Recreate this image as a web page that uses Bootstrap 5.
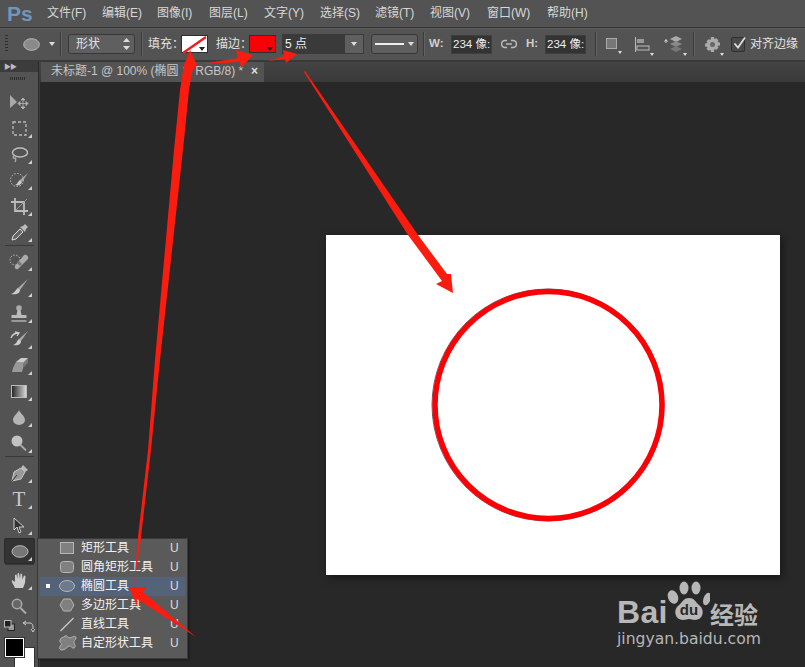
<!DOCTYPE html>
<html lang="zh">

<head>
    <meta charset="UTF-8">
    <meta name="viewport" content="width=device-width, initial-scale=1.0">
    <title>Photoshop</title>
    <link href="https://cdn.jsdelivr.net/npm/bootstrap@5.3.0/dist/css/bootstrap.min.css" rel="stylesheet">
    <style>
        html, body { height: 100%; }
        body {
            background: #282828;
            color: #dcdcdc;
            font-family: "Liberation Sans", "Noto Sans CJK SC", sans-serif;
            font-size: 12px;
            overflow: hidden;
            width: 805px;
            height: 667px;
        }
        .ps-page { position: relative; width: 805px; height: 667px; }
        .ps-menubar { height: 28px; background: #535353; border-bottom: 1px solid #333; }
        .ps-logo { width: 47px; padding-left: 7px; font-size: 21px; font-weight: 700; color: #6f97bb; line-height: 26px; }
        .ps-menuitem { color: #d8d8d8; line-height: 27px; white-space: nowrap; }
        .m1 { width: 55px; } .m2 { width: 55px; } .m3 { width: 52px; } .m4 { width: 55px; } .m5 { width: 56px; }
        .m6 { width: 55px; } .m7 { width: 55px; } .m8 { width: 57px; } .m9 { width: 60px; }

        .ps-options { height: 34px; background: #535353; border-bottom: 2px solid #3a3a3a; box-shadow: inset 0 1px 0 #5e5e5e; }
        .ps-grip { width: 3px; height: 18px; margin-left: 5px; background: repeating-linear-gradient(#2e2e2e 0 1px, transparent 1px 3px); }
        .ps-sep { width: 1px; height: 24px; background: #3b3b3b; box-shadow: 1px 0 0 #626262; }
        .ps-select { width: 67px; height: 20px; margin-left: 7px; background: #5f5f5f; border: 1px solid #383838; border-radius: 3px; padding-left: 7px; }
        .ps-label { color: #e2e2e2; white-space: nowrap; }
        .ps-lab-fill { width: 33px; }
        .ps-lab-w { width: 14px; font-weight: 700; font-size: 11.5px; color: #cfcfcf; }
        .ps-lab-h { width: 11px; font-weight: 700; font-size: 11.5px; color: #cfcfcf; }
        .ps-swatch { position: relative; width: 27px; height: 18px; border: 1px solid #2e2e2e; }
        .ps-swatch::after { content: ""; position: absolute; right: 2px; bottom: 1px; border: 3px solid transparent; border-top: 4px solid #222; border-bottom: 0; }
        .ps-red { background: #f80006; }
        .ps-combo { width: 82px; height: 20px; margin-left: 6px; border: 1px solid #3a3a3a; background: #3a3a3a; }
        .ps-combo-text { width: 62px; padding-left: 2px; color: #eee; line-height: 18px; }
        .ps-combo-btn { flex: 1; background: #5f5f5f; position: relative; }
        .ps-caret { display: block; width: 0; height: 0; border: 3px solid transparent; border-top: 4px solid #ddd; border-bottom: 0; }
        .ps-stroke-btn { width: 47px; height: 20px; margin-left: 7px; background: #5f5f5f; border: 1px solid #383838; border-radius: 3px; padding: 0 3px 0 3px; }
        .ps-stroke-line { width: 31px; height: 2px; background: #eee; }
        .ps-num { width: 41px; height: 19px; background: #333; border: 1px solid #3e3e3e; color: #eee; font-size: 11.5px; line-height: 17px; padding-left: 1px; white-space: nowrap; }
        .ps-check { width: 14px; height: 15px; background: #4a4a4a; border: 1px solid #2f2f2f; border-radius: 2px; }
        .ps-check svg { margin-top: -1px; }
        .ps-tri { position: relative; display: block; line-height: 0; }
        .ps-tri::after { content: ""; position: absolute; right: -4px; bottom: -4px; border: 2px solid transparent; border-top: 3px solid #ddd; border-bottom: 0; }

        .ml-5px { margin-left: 5px; } .ml-7px { margin-left: 7px; } .ml-8px { margin-left: 8px; }
        .ml-9px { margin-left: 9px; } .ml-10px { margin-left: 10px; } .ml-11px { margin-left: 11px; } .ml-12px { margin-left: 12px; }
        .ml-14px { margin-left: 14px; } .ml-15px { margin-left: 15px; } .ml-17px { margin-left: 17px; } .ml-6px { margin-left: 6px; }

        .ps-body { height: 605px; }
        .ps-tools { width: 39px; background: #535353; border-right: 1px solid #2c2c2c; box-shadow: 1px 0 0 #3c3c3c; flex: none; }
        .ps-tools-head { height: 10px; background: #3c3c3c; color: #bbb; font-size: 7px; line-height: 9px; padding-left: 4px; letter-spacing: -1px; }
        .ps-tools-grip { height: 17px; padding-top: 5px; }
        .ps-tools-grip span { display: block; width: 15px; height: 3px; margin-left: 10px; background: repeating-linear-gradient(90deg, #2e2e2e 0 1px, transparent 1px 2px); }
        .ps-tool { height: 26px; position: relative; }
        .ps-tool.ps-more::after { content: ""; position: absolute; left: 28px; bottom: 3px; border-style: solid; border-width: 0 0 4px 4px; border-color: transparent transparent #d0d0d0 transparent; }
        .ps-tool-active { background: #333; border-radius: 3px; margin: 0 3px 0 4px; box-shadow: inset 0 0 0 1px #2b2b2b; }
        .ps-tool-active.ps-more::after { left: 24px; }
        .ps-toolsep { height: 3px; margin: 0 4px 0 5px; border-top: 1px solid #383838; }
        .ps-toolsep-wide { height: 4px; }
        .ps-t-tool { font-family: "Liberation Serif", serif; font-size: 21px; color: #c8c8c8; line-height: 20px; }
        .ps-swap { height: 18px; padding: 1px 0 0 4px; }
        .ps-colors { position: relative; height: 31px; }
        .ps-fg { position: absolute; left: 5px; top: 1px; width: 19px; height: 19px; background: #000; border: 1px solid #fff; outline: 1px solid #333; z-index: 1; }
        .ps-bg { position: absolute; left: 15px; top: 11px; width: 19px; height: 19px; background: #fff; outline: 1px solid #333; }

        .ps-tabbar { height: 20px; background: linear-gradient(#444, #3a3a3a); padding-left: 2px; }
        .ps-tab { width: 223px; background: #535353; color: #c6c6c6; padding-left: 10px; line-height: 19px; position: relative; white-space: nowrap; }
        .ps-tab-x { position: absolute; right: 6px; top: 0; color: #ddd; font-size: 12px; font-weight: 700; }
        .ps-doc { width: 454px; height: 340px; margin: 153px 0 0 287px; background: #fff; box-shadow: 2px 3px 8px rgba(0, 0, 0, .45); }
        .ps-doc svg { display: block; }

        .ps-flyout { position: absolute; left: 37px; top: 538px; width: 151px; height: 121px; background: #5a5a5a; border: 1px solid #3b3b3b; box-shadow: 1px 1px 2px rgba(0,0,0,.4); z-index: 3; }
        .ps-fly-row { height: 19px; color: #f2f2f2; margin: 0 2px; position: relative; line-height: 19px; }
        .ps-fly-active { background: #55637a; }
        .ps-bullet { position: absolute; left: 6px; top: 7px; width: 4px; height: 4px; background: #fff; }
        .ps-fly-icon { position: absolute; left: 19px; top: 1px; }
        .ps-fly-text { position: absolute; left: 41px; top: 0; white-space: nowrap; }
        .ps-fly-key { position: absolute; left: 130px; top: 0; color: #ddd; }

        .ps-arrows { position: absolute; left: 0; top: 0; z-index: 5; pointer-events: none; }

        .bd-mark { position: absolute; left: 617px; top: 578px; width: 150px; height: 76px; color: #b7b7b7; z-index: 4; }
        .bd-bai { position: absolute; left: 0; top: 16px; font-size: 32px; font-weight: 700; line-height: 36px; letter-spacing: .3px; }
        .bd-jing { position: absolute; left: 93px; top: 20px; font-family: "Noto Sans CJK SC", sans-serif; font-size: 24px; line-height: 32px; font-weight: 700; }
        .bd-url { position: absolute; left: 0; top: 50px; font-family: "DejaVu Sans", sans-serif; font-size: 15.6px; line-height: 22px; white-space: nowrap; }
        .bd-paw { position: absolute; left: 49px; top: 3px; }
    </style>
</head>

<body>
    <div class="ps-page">
        <div class="ps-menubar d-flex align-items-center">
            <div class="ps-logo">Ps</div>
            <div class="ps-menuitem m1">文件(F)</div>
            <div class="ps-menuitem m2">编辑(E)</div>
            <div class="ps-menuitem m3">图像(I)</div>
            <div class="ps-menuitem m4">图层(L)</div>
            <div class="ps-menuitem m5">文字(Y)</div>
            <div class="ps-menuitem m6">选择(S)</div>
            <div class="ps-menuitem m7">滤镜(T)</div>
            <div class="ps-menuitem m8">视图(V)</div>
            <div class="ps-menuitem m9">窗口(W)</div>
            <div class="ps-menuitem">帮助(H)</div>
        </div>

        <div class="ps-options d-flex align-items-center">
            <div class="ps-grip"></div>
            <svg class="ml-15px" width="17" height="13" viewBox="0 0 17 13"><ellipse cx="8.5" cy="6.5" rx="7.8" ry="5.8" fill="#8a8a8a" stroke="#bdbdbd"/></svg>
            <span class="ps-caret ml-9px"></span>
            <div class="ps-sep ml-5px"></div>
            <div class="ps-select d-flex align-items-center justify-content-between">
                <span class="ps-label">形状</span>
                <svg class="me-1" width="7" height="12" viewBox="0 0 7 12"><path d="M3.500 0 7 4H0zM0 8h7l-3.500 4z" fill="#ddd"/></svg>
            </div>
            <div class="ps-sep ml-6px"></div>
            <span class="ps-label ps-lab-fill ml-6px">填充：</span>
            <div class="ps-swatch bg-white"></div>
            <span class="ps-label ps-lab-fill ml-8px">描边：</span>
            <div class="ps-swatch ps-red"></div>
            <div class="ps-combo d-flex">
                <div class="ps-combo-text">5 点</div>
                <div class="ps-combo-btn d-flex align-items-center justify-content-center"><span class="ps-caret"></span></div>
            </div>
            <div class="ps-stroke-btn d-flex align-items-center gap-1">
                <span class="ps-stroke-line"></span><span class="ps-caret"></span>
            </div>
            <div class="ps-sep ml-5px"></div>
            <span class="ps-label ps-lab-w ml-5px">W:</span>
            <div class="ps-num ml-8px">234 像:</div>
            <svg class="ml-9px" width="16" height="10" viewBox="0 0 16 10"><path d="M6 1.500H4a3.500 3.500 0 0 0 0 7h2M10 1.500h2a3.500 3.500 0 0 1 0 7h-2M5 5h6" fill="none" stroke="#bbb" stroke-width="1.600"/></svg>
            <span class="ps-label ps-lab-h ml-9px">H:</span>
            <div class="ps-num ml-8px">234 像:</div>
            <div class="ps-sep ml-9px"></div>
            <span class="ps-tri ml-10px"><svg width="12" height="12" viewBox="0 0 12 12"><rect x=".5" y=".5" width="10" height="10" fill="#777" stroke="#aaa"/></svg></span>
            <span class="ps-tri ml-17px"><svg width="15" height="15" viewBox="0 0 15 15"><path d="M.5 0v15" stroke="#bbb"/><rect x="2" y="2" width="7" height="4" fill="#999"/><rect x="2" y="9" width="12" height="4" fill="#555" stroke="#bbb"/></svg></span>
            <span class="ps-tri ml-14px"><svg width="19" height="16" viewBox="0 0 19 16"><path d="M2 7V4M.5 5.500 2 3.500l1.500 2" fill="none" stroke="#ddd"/><path d="M12 0l6 3-6 3-6-3z" fill="#aaa"/><path d="M12 5l6 3-6 3-6-3z" fill="#888"/><path d="M12 10l6 3-6 3-6-3z" fill="#777"/></svg></span>
            <div class="ps-sep ml-10px"></div>
            <span class="ps-tri ml-11px"><svg width="15" height="15" viewBox="0 0 15 15"><path d="M6 0h3l.5 2 2-.8 2 2-1 1.900 2.500.4v3l-2.500.5 1 1.800-2 2-2-.9L9 15H6l-.5-2.100-2 .9-2-2 1-1.800L0 9.500v-3l2.500-.4-1-1.900 2-2 2 .8z" fill="#aaa"/><circle cx="7.500" cy="7.500" r="2.500" fill="#666"/></svg></span>
            <div class="ps-check ml-11px">
                <svg class="d-block" width="14" height="14" viewBox="0 0 14 14"><path d="M2.500 6.500 6 10.500 13 .5" fill="none" stroke="#ddd" stroke-width="1.800"/></svg>
            </div>
            <span class="ps-label ml-5px">对齐边缘</span>
        </div>

        <div class="ps-body d-flex">
            <div class="ps-tools">
                <div class="ps-tools-head">&#9654;&#9654;</div>
                <div class="ps-tools-grip"><span></span></div>

                <div class="ps-tool d-flex align-items-center justify-content-center">
                    <svg width="20" height="16" viewBox="0 0 20 16"><path d="M1 1v13l7-6z" fill="#aaa"/><path d="M14 5v9M10 9.500h8M14 4l-2 2h4zM14 15l-2-2h4zM9 9.500l2-2v4zM19 9.500l-2-2v4z" stroke="#b5b5b5" fill="#b5b5b5" stroke-width=".8"/></svg>
                </div>
                <div class="ps-tool ps-more d-flex align-items-center justify-content-center">
                    <svg width="15" height="15" viewBox="0 0 15 15"><rect x="1" y="1" width="13" height="13" fill="none" stroke="#bbb" stroke-width="1.300" stroke-dasharray="3 2"/></svg>
                </div>
                <div class="ps-tool ps-more d-flex align-items-center justify-content-center">
                    <svg width="17" height="17" viewBox="0 0 17 17"><ellipse cx="9" cy="6.500" rx="7.500" ry="4.500" fill="none" stroke="#c0c0c0" stroke-width="1.400"/><path d="M3 10c-2 2 0 3 1 2s1 2 0 4" fill="none" stroke="#aaa" stroke-width="1.300"/></svg>
                </div>
                <div class="ps-tool ps-more d-flex align-items-center justify-content-center">
                    <svg width="19" height="17" viewBox="0 0 19 17"><circle cx="7" cy="8" r="6.500" fill="none" stroke="#bbb" stroke-dasharray="1.500 1.500"/><path d="M18 1 10 8l2 2z" fill="#aaa"/><path d="M10 8c-2 1-2 4-5 5 3 1 6 0 7-3z" fill="#ccc"/></svg>
                </div>
                <div class="ps-tool ps-more d-flex align-items-center justify-content-center">
                    <svg width="17" height="17" viewBox="0 0 17 17"><path d="M5 5h7v7H5z" fill="#555"/><path d="M4 0v13h13M0 4h13v13" fill="none" stroke="#bbb" stroke-width="1.800"/><path d="M5 12 16 1" stroke="#999"/></svg>
                </div>
                <div class="ps-tool ps-more d-flex align-items-center justify-content-center">
                    <svg width="17" height="17" viewBox="0 0 17 17"><path d="M1 16l1-4 7-7 3 3-7 7z" fill="#666" stroke="#ddd"/><path d="M9 3l5 5 1-3 2-2-3-3-2 2z" fill="#bbb"/></svg>
                </div>
                <div class="ps-toolsep"></div>
                <div class="ps-tool ps-more d-flex align-items-center justify-content-center">
                    <svg width="20" height="17" viewBox="0 0 20 17"><circle cx="6" cy="7" r="5" fill="none" stroke="#bbb" stroke-dasharray="1.500 1.500"/><path d="M6 13 15 2c2-1 5 1 4 4L9 16c-2 1-4-1-3-3z" fill="#aaa"/><path d="M10 8l3 3-2 2-3-3z" fill="#777"/></svg>
                </div>
                <div class="ps-tool ps-more d-flex align-items-center justify-content-center">
                    <svg width="19" height="16" viewBox="0 0 19 16"><path d="M18 0 8 9l2 2z" fill="#aaa"/><path d="M8 9c-2 1-3 5-7 6 4 1 9 0 9-4z" fill="#ccc"/></svg>
                </div>
                <div class="ps-tool ps-more d-flex align-items-center justify-content-center">
                    <svg width="16" height="17" viewBox="0 0 16 17"><circle cx="8" cy="3" r="2.800" fill="#aaa"/><path d="M6.500 5h3l1 5h5v3H.5v-3h5z" fill="#bbb"/><path d="M.5 15h15v2H.5z" fill="#999"/></svg>
                </div>
                <div class="ps-tool ps-more d-flex align-items-center justify-content-center">
                    <svg width="18" height="16" viewBox="0 0 18 16"><path d="M18 0 9 8l2 2z" fill="#aaa"/><path d="M9 8c-2 1-2 5-6 6 4 1 8 0 8-4z" fill="#ccc"/><path d="M1 7c1-3 4-5 8-5M5 1 9 2 7 5" fill="none" stroke="#ccc" stroke-width="1.300"/></svg>
                </div>
                <div class="ps-tool ps-more d-flex align-items-center justify-content-center">
                    <svg width="17" height="14" viewBox="0 0 17 14"><path d="M5 4 10 0h7l-4 5-1 1H5z" fill="#ccc"/><path d="M5 4h7v6l-1 4H1l1-4z" fill="#999"/><path d="M12 5l5-5v5l-5 5z" fill="#777"/></svg>
                </div>
                <div class="ps-tool ps-more d-flex align-items-center justify-content-center">
                    <svg width="16" height="13" viewBox="0 0 16 13"><defs><linearGradient id="gr"><stop offset="0" stop-color="#222"/><stop offset="1" stop-color="#ddd"/></linearGradient></defs><rect x=".5" y=".5" width="15" height="12" fill="url(#gr)" stroke="#bbb"/></svg>
                </div>
                <div class="ps-tool ps-more d-flex align-items-center justify-content-center">
                    <svg width="12" height="15" viewBox="0 0 12 15"><path d="M6 0c1 3 6 6 6 10a6 5 0 0 1-12 0C0 6 5 3 6 0z" fill="#b5b5b5"/></svg>
                </div>
                <div class="ps-tool ps-more d-flex align-items-center justify-content-center">
                    <svg width="16" height="16" viewBox="0 0 16 16"><circle cx="6" cy="6" r="5.500" fill="#c2c2c2"/><path d="M9.500 10l5.500 5.500" stroke="#aaa" stroke-width="1.800"/></svg>
                </div>
                <div class="ps-toolsep ps-toolsep-wide"></div>
                <div class="ps-tool ps-more d-flex align-items-center justify-content-center">
                    <svg width="17" height="17" viewBox="0 0 17 17"><path d="M1 16 3 7l7-4 4 4-4 7z" fill="#999" stroke="#ccc"/><path d="M1 16l5-6" stroke="#333"/><path d="M10 3l2-3 5 5-3 2z" fill="#bbb"/></svg>
                </div>
                <div class="ps-tool ps-more d-flex align-items-center justify-content-center">
                    <span class="ps-t-tool">T</span>
                </div>
                <div class="ps-tool ps-more d-flex align-items-center justify-content-center">
                    <svg width="12" height="17" viewBox="0 0 12 17"><path d="M1 1v12l3-3 2 6 2-1-2-5h5z" fill="#333" stroke="#ccc"/></svg>
                </div>
                <div class="ps-tool ps-tool-active ps-more d-flex align-items-center justify-content-center">
                    <svg width="18" height="13" viewBox="0 0 18 13"><ellipse cx="9" cy="6.500" rx="8" ry="5.800" fill="#777" stroke="#bbb"/></svg>
                </div>
                <div class="ps-toolsep"></div>
                <div class="ps-tool ps-more d-flex align-items-center justify-content-center">
                    <svg width="17" height="17" viewBox="0 0 17 17"><path d="M4 16C3 13 0 10 1 8l3 2V3l1.500-.5L6.500 7V1.500L8 1l1 6 .5-5.500L11 2l.5 5.500L13 3.500l1.500.5-.5 7-2 5z" fill="#ccc"/></svg>
                </div>
                <div class="ps-tool d-flex align-items-center justify-content-center">
                    <svg width="16" height="16" viewBox="0 0 16 16"><circle cx="6" cy="6" r="4.700" fill="#666" stroke="#aaa" stroke-width="1.500"/><path d="M9.500 10l5.500 5.500" stroke="#aaa" stroke-width="2"/></svg>
                </div>
                <div class="ps-swap d-flex gap-2">
                    <svg width="11" height="11" viewBox="0 0 11 11"><rect x="4" y="4" width="6.500" height="6.500" fill="#999" stroke="#222"/><rect x=".5" y=".5" width="6.500" height="6.500" fill="#222" stroke="#bbb"/></svg>
                    <svg width="12" height="12" viewBox="0 0 12 12"><path d="M3 1 0 3l3 2M1 3h6c2 0 3 2 3 4v2M8 9l2 3 2-3" fill="none" stroke="#ccc"/></svg>
                </div>
                <div class="ps-colors">
                    <div class="ps-fg"></div>
                    <div class="ps-bg"></div>
                </div>
            </div>

            <div class="flex-grow-1">
                <div class="ps-tabbar d-flex">
                    <div class="ps-tab">未标题-1 @ 100% (椭圆 1, RGB/8) *<span class="ps-tab-x">×</span></div>
                </div>
                <div class="ps-doc">
                    <svg width="454" height="340" viewBox="0 0 454 340">
                        <circle cx="222" cy="170" r="116" fill="none" stroke="#5d6a72" stroke-width="1"/>
                        <circle cx="222.500" cy="170" r="113.500" fill="none" stroke="#fd0006" stroke-width="5.500"/>
                    </svg>
                </div>
            </div>
        </div>

        <div class="ps-flyout">
            <div class="ps-fly-row"><svg class="ps-fly-icon" width="16" height="16" viewBox="0 0 16 16"><rect x="1.500" y="2.500" width="13" height="11" fill="#808080" stroke="#b5b5b5"/></svg><span class="ps-fly-text">矩形工具</span><span class="ps-fly-key">U</span></div>
            <div class="ps-fly-row"><svg class="ps-fly-icon" width="16" height="16" viewBox="0 0 16 16"><rect x="1.500" y="2.500" width="13" height="11" rx="3" fill="#808080" stroke="#b5b5b5"/></svg><span class="ps-fly-text">圆角矩形工具</span><span class="ps-fly-key">U</span></div>
            <div class="ps-fly-row ps-fly-active"><span class="ps-bullet"></span><svg class="ps-fly-icon" width="16" height="16" viewBox="0 0 16 16"><ellipse cx="8" cy="8" rx="7.500" ry="5.500" fill="#6d7a8e" stroke="#b5b5b5"/></svg><span class="ps-fly-text">椭圆工具</span><span class="ps-fly-key">U</span></div>
            <div class="ps-fly-row"><svg class="ps-fly-icon" width="16" height="16" viewBox="0 0 16 16"><path d="M4.500 2h7L15 8l-3.500 6h-7L1 8z" fill="#808080" stroke="#b5b5b5"/></svg><span class="ps-fly-text">多边形工具</span><span class="ps-fly-key">U</span></div>
            <div class="ps-fly-row"><svg class="ps-fly-icon" width="16" height="16" viewBox="0 0 16 16"><path d="M1.500 15 14.500 2" stroke="#ccc" stroke-width="1.200"/></svg><span class="ps-fly-text">直线工具</span><span class="ps-fly-key">U</span></div>
            <div class="ps-fly-row"><svg class="ps-fly-icon" width="18" height="16" viewBox="0 0 18 16"><path d="M6 1c2-1 3 2 5 2 2-1 6-3 6 0 0 2-3 3-2 5s2 4 0 5-3-3-5-2-4 4-7 4-3-3-1-5-2-2-1-5 3-2 5-4z" fill="#808080" stroke="#b5b5b5"/></svg><span class="ps-fly-text">自定形状工具</span><span class="ps-fly-key">U</span></div>
        </div>

        <div class="bd-mark">
            <span class="bd-bai">Bai</span>
            <svg class="bd-paw" width="44" height="44" viewBox="0 0 44 44">
                <ellipse cx="18" cy="7" rx="4.500" ry="6.500" fill="#b7b7b7"/>
                <ellipse cx="30" cy="7" rx="4.500" ry="6.500" fill="#b7b7b7"/>
                <ellipse cx="7" cy="16" rx="5" ry="7" transform="rotate(-20 7 16)" fill="#b7b7b7"/>
                <ellipse cx="41" cy="18" rx="3.500" ry="6.500" transform="rotate(20 41 18)" fill="#b7b7b7"/>
                <path d="M23 17c6 0 7 5 11 8 5 4 3 14-5 14-3 0-4-1-6-1s-3 1-6 1c-8 0-10-10-5-14 4-3 5-8 11-8z" fill="#b7b7b7"/>
                <text x="23" y="34" text-anchor="middle" font-family="Liberation Sans, sans-serif" font-size="15" font-weight="700" fill="#282828">du</text>
            </svg>
            <span class="bd-jing">经验</span>
            <span class="bd-url">jingyan.baidu.com</span>
        </div>

        <svg class="ps-arrows" width="805" height="667" viewBox="0 0 805 667">
            <g fill="#fb1c10">
                <path d="M134 587 138 537 148 450 155 360 174 150 180 90 184 65 190 50 197 65 192 72 189 90 183 150 160 360 151 450 141 537z"/>
                <path d="M202 64 238 58 236 50 253 55 241 68 240 62z"/>
                <path d="M268 61 284 56 283 50 297 54 286 63 285 59z"/>
                <path d="M304 72 305 71 418 235 447 274 451 274 453 293 436 284 442 281 408 235z"/>
                <path d="M129 587 147 587 143 592 196 637 137 599 137 606z"/>
            </g>
            <path d="M183 53 206 37" stroke="#f01c20" stroke-width="2.500" fill="none"/>
        </svg>
    </div>
    <script src="https://cdn.jsdelivr.net/npm/bootstrap@5.3.0/dist/js/bootstrap.bundle.min.js"></script>
</body>

</html>
